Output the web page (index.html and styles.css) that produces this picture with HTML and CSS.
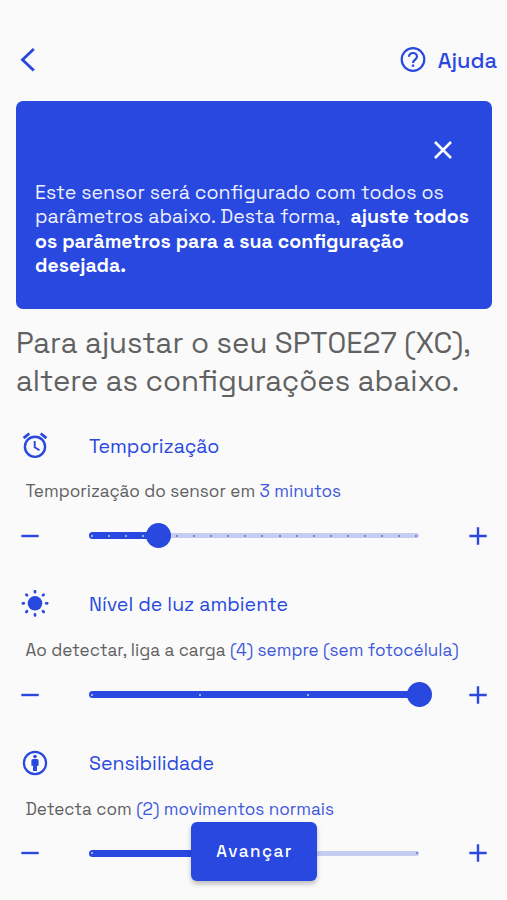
FILE: index.html
```html
<!DOCTYPE html>
<html lang="pt-BR">
<head>
<meta charset="utf-8">
<title>Ajustar sensor</title>
<link rel="stylesheet" href="styles.css">
</head>
<body>
<main class="screen">
  <header class="topbar">
    <svg class="back" width="16" height="26" viewBox="0 0 16 26"><path d="M13.800 2 2.500 12.700l11.300 10.800" fill="none" stroke="currentColor" stroke-width="2.900"/></svg>
    <div class="help">
      <svg width="26" height="26" viewBox="0 0 26 26" fill="none" stroke="currentColor" stroke-width="2.200"><circle cx="13" cy="12.500" r="11.300"/><path d="M9 9.800C9 7.400 10.800 6 13 6s4 1.600 4 3.800c0 2.600-4 3.100-4 6.200"/><path d="M13 17.500v2.300" stroke-width="2.400"/></svg>
      <span class="help-label">Ajuda</span>
    </div>
  </header>

  <section class="banner">
    <svg class="close" width="20" height="20" viewBox="0 0 20 20"><path d="m2 2 16 16M18 2 2 18" stroke="currentColor" stroke-width="2.500"/></svg>
    <p class="banner-text">
      <span class="line">Este sensor será configurado com todos os</span>
      <span class="line">parâmetros abaixo. Desta forma,&nbsp; <b>ajuste todos</b></span>
      <b class="line">os parâmetros para a sua configuração</b>
      <b class="line">desejada.</b>
    </p>
  </section>

  <h1 class="title"><span class="line">Para ajustar o seu SPT0E27 (XC),</span><span class="line">altere as configurações abaixo.</span></h1>

  <section class="setting">
    <div class="setting-head">
      <svg class="icon" width="28" height="28" viewBox="0 0 28 28" fill="none" stroke="currentColor"><circle cx="14" cy="14.800" r="10.100" stroke-width="2.400"/><path d="M13.700 9v6.300l4.800 3" stroke-width="1.900"/><path d="m2.600 6.200 5.700-4.700M25.400 6.200l-5.700-4.700" stroke-width="2.800"/></svg>
      <h2 class="name">Temporização</h2>
    </div>
    <p class="desc">Temporização do sensor em <span class="value">3 minutos</span></p>
    <div class="control">
      <svg class="step" width="18" height="18" viewBox="0 0 18 18"><path d="M.3 9h17.400"/></svg>
      <div class="slider"><div class="fill f1"></div><div class="ticks"><i class="on"></i><i class="on"></i><i class="on"></i><i class="on"></i><i></i><i></i><i></i><i></i><i></i><i></i><i></i><i></i><i></i><i></i><i></i><i></i><i></i><i></i><i></i><i></i></div><div class="thumb p1"></div></div>
      <svg class="step" width="18" height="18" viewBox="0 0 18 18"><path d="M.3 9h17.400M9 .3v17.400"/></svg>
    </div>
  </section>

  <section class="setting">
    <div class="setting-head">
      <svg class="icon" width="28" height="28" viewBox="0 0 28 28"><circle cx="14" cy="13.300" r="7.300" fill="currentColor"/><g transform="translate(0 -.7)" stroke="currentColor" stroke-width="2.700" stroke-linecap="round"><path d="M14 1.900v1M14 25.100v1M1.800 14h1M25.200 14h1"/><path d="m5.300 5.300.7.7M22 22l.7.7M5.300 22.700 6 22M22 6l.7-.7"/></g></svg>
      <h2 class="name">Nível de luz ambiente</h2>
    </div>
    <p class="desc">Ao detectar, liga a carga <span class="value">(4) sempre (sem fotocélula)</span></p>
    <div class="control">
      <svg class="step" width="18" height="18" viewBox="0 0 18 18"><path d="M.3 9h17.400"/></svg>
      <div class="slider"><div class="fill f2"></div><div class="ticks"><i class="on"></i><i class="on"></i><i class="on"></i><i class="on"></i></div><div class="thumb p2"></div></div>
      <svg class="step" width="18" height="18" viewBox="0 0 18 18"><path d="M.3 9h17.400M9 .3v17.400"/></svg>
    </div>
  </section>

  <section class="setting">
    <div class="setting-head">
      <svg class="icon" width="28" height="28" viewBox="0 0 28 28"><circle cx="14" cy="14" r="11.100" fill="none" stroke="currentColor" stroke-width="2.200"/><g fill="currentColor"><circle cx="14" cy="7.500" r="1.800"/><path d="M12 10h4q1.600 0 1.600 1.600v5.200H16v5.300h-4v-5.300h-1.600v-5.200Q10.400 10 12 10z"/></g></svg>
      <h2 class="name">Sensibilidade</h2>
    </div>
    <p class="desc">Detecta com <span class="value">(2) movimentos normais</span></p>
    <div class="control">
      <svg class="step" width="18" height="18" viewBox="0 0 18 18"><path d="M.3 9h17.400"/></svg>
      <div class="slider"><div class="fill f3"></div><div class="ticks"><i class="on"></i><i class="on"></i><i></i></div></div>
      <svg class="step" width="18" height="18" viewBox="0 0 18 18"><path d="M.3 9h17.400M9 .3v17.400"/></svg>
    </div>
  </section>

  <button class="next">Avançar</button>
</main>
</body>
</html>
```
FILE: styles.css
```css
* { box-sizing: border-box; }
body { margin: 0; background: #fafafa; font-family: "Space Grotesk", Inter, "Liberation Sans", sans-serif; color: #616161; }
h1, h2, p { margin: 0; font-weight: 400; }
svg { display: block; flex: none; }
.screen { position: relative; width: 507px; height: 900px; overflow: hidden; color: #616161; }
.topbar { display: flex; justify-content: space-between; align-items: center; height: 101px; padding: 18px 10px 0 20px; color: #2948df; }
.help { display: flex; align-items: center; gap: 12px; }
.help-label { font-size: 21.8px; font-weight: 500; line-height: 28px; padding-top: 2px; white-space: nowrap; }
.banner { width: 476.5px; height: 207.5px; margin-left: 15.5px; padding: 39px 20px 0 19.5px; border-radius: 7px; background: #2848e0; color: #fff; display: flex; flex-direction: column; }
.close { align-self: flex-end; margin-right: 19px; }
.banner-text { margin-top: 20.8px; font-size: 19.53px; line-height: 24.4px; color: #eef0ff; }
.banner-text b { font-weight: 700; color: #fff; }
.line { display: block; white-space: nowrap; }
.title { margin: 15.5px 0 0 16px; font-size: 29.3px; line-height: 38px; }
.setting { height: 158.9px; padding-left: 21px; }
.title + .setting { margin-top: 23.5px; }
.setting-head { display: flex; align-items: center; height: 44px; gap: 40px; color: #2948df; }
.name { font-size: 19.53px; line-height: 24px; white-space: nowrap; padding-top: 2px; }
.desc { margin: 11.3px 0 0 4.5px; font-size: 17.13px; line-height: 24px; white-space: nowrap; }
.value { color: #3f58dc; }
.control { display: flex; align-items: center; margin-top: 20.4px; height: 25px; }
.step { stroke: #2948df; stroke-width: 2.4px; }
.slider { position: relative; flex: none; width: 330px; height: 5px; margin: 0 50px; border-radius: 3px; background: #c5cdf3; }
.fill { position: absolute; left: 0; top: -1px; height: 7px; border-radius: 4px; background: #2848e0; }
.f1 { width: 70px; }
.f2 { width: 330px; }
.f3 { width: 165px; }
.ticks { position: absolute; inset: 0 1.5px; display: flex; justify-content: space-between; align-items: center; }
.ticks i { width: 2px; height: 2px; border-radius: 1px; background: #5d6fcb; }
.ticks .on { background: #c5cdf7; }
.thumb { position: absolute; top: -10px; width: 25px; height: 25px; border-radius: 50%; background: #2848e0; }
.p1 { left: 56.5px; }
.p2 { left: 317.5px; }
.next { position: absolute; left: 191px; top: 822px; width: 126px; height: 58.5px; padding: 0; border: 0; border-radius: 6px; background: #2848e0; color: #fff; font: 500 17px/59px "Space Grotesk", Inter, sans-serif; letter-spacing: 1.5px; text-indent: 1px; box-shadow: 0 3px 5px rgba(0,0,0,.25); }
```
